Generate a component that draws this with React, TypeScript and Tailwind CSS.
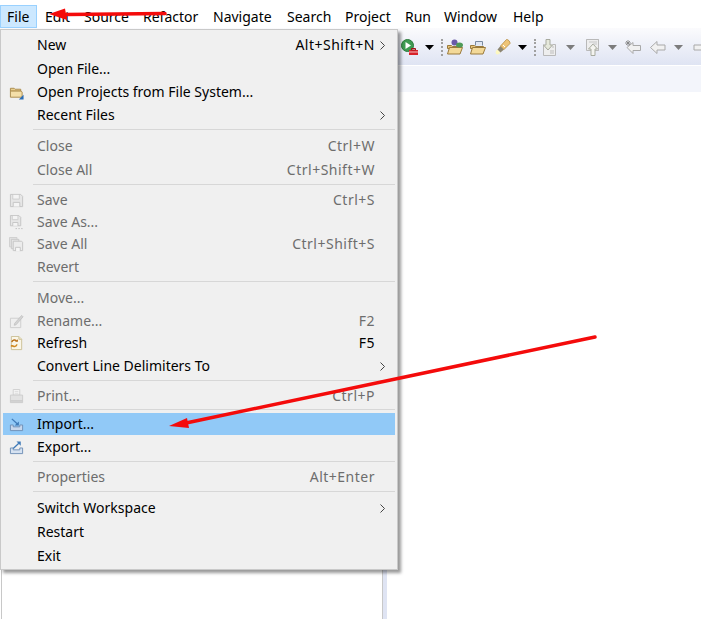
import React from 'react';

type Row = {
  label: string;
  h: number;
  keys?: string;
  off?: boolean;
  sub?: boolean;
  icon?: React.ReactNode;
  active?: boolean;
};

const FloppyIcon = () => (
  <svg width="15" height="15" viewBox="0 0 16 16" fill="none">
    <path d="M1.500 1.500h11l2 2v11h-13z" fill="#e6e6e6" stroke="#c4c4c4" />
    <path d="M4 2v4.500h7V2" fill="#f4f4f4" stroke="#cfcfcf" />
    <path d="M4.500 14.500V10h7v4.500" fill="#f4f4f4" stroke="#c4c4c4" />
  </svg>
);

const SaveAsIcon = () => (
  <svg width="15" height="15" viewBox="0 0 16 16" fill="none">
    <path d="M1.500 .5h9l2 2v9h-11z" fill="#e6e6e6" stroke="#c4c4c4" />
    <path d="M3.500 1v4h6V1" fill="#f4f4f4" stroke="#cfcfcf" />
    <path d="M4 11.500V8h5.500v3.500" fill="#f4f4f4" stroke="#c4c4c4" />
    <path d="M7 14.500h1.500M10 14.500h1.500M13 14.500h1.500" stroke="#bdbdbd" />
  </svg>
);

const SaveAllIcon = () => (
  <svg width="15" height="15" viewBox="0 0 16 16" fill="none">
    <path d="M.5.5h8v10h-8z" fill="#e2e2e2" stroke="#cfcfcf" />
    <path d="M2.500 2.500h8v10h-8z" fill="#e6e6e6" stroke="#c8c8c8" />
    <path d="M4.500 4.500h9l1 1v9h-10z" fill="#ececec" stroke="#c4c4c4" />
    <path d="M7 15v-4h5v4" fill="#f6f6f6" stroke="#c4c4c4" />
  </svg>
);

const RenameIcon = () => (
  <svg width="15" height="15" viewBox="0 0 16 16" fill="none">
    <path d="M1.500 4.500h11v10h-11z" fill="#efefef" stroke="#cdcdcd" />
    <path d="M6 10l7.500-8.500 1.500 1.500L7.500 11.500 5.500 12z" fill="#d4d4d4" stroke="#bdbdbd" strokeWidth=".8" />
  </svg>
);

const RefreshIcon = () => (
  <svg width="15" height="15" viewBox="0 0 16 16" fill="none">
    <path d="M2.500.5h8l3 3v11h-11z" fill="#faf6e8" stroke="#cbbf94" />
    <path d="M10.500.5v3h3" fill="#efe6c6" stroke="#cbbf94" />
    <path d="M3 6.500C3.500 3.800 7.200 3.400 8 5.500" stroke="#b9701a" strokeWidth="1.600" />
    <path d="M6.500 6h3V3.500z" fill="#b9701a" />
    <path d="M8.500 9C8 11.600 4.300 12 3.500 10" stroke="#d08a22" strokeWidth="1.600" />
    <path d="M5 9.500H2V12z" fill="#d08a22" />
  </svg>
);

const PrintIcon = () => (
  <svg width="15" height="15" viewBox="0 0 16 16" fill="none">
    <path d="M4.500.5h7v6h-7z" fill="#f7f7f7" stroke="#cfcfcf" />
    <path d="M6 2.500h4M6 4.500h4" stroke="#d9d9d9" />
    <path d="M1.500 6.500h13v6h-13z" fill="#e2e2e2" stroke="#cccccc" />
    <path d="M1.500 12.500h13v2h-13z" fill="#d4d4d4" stroke="#cccccc" />
  </svg>
);

const ImportIcon = () => (
  <svg width="15" height="15" viewBox="0 0 16 16" fill="none">
    <path d="M1.500 8.500v6h13v-6h-3v2h-7v-2z" fill="#c7d7ec" stroke="#6f8fb5" />
    <path d="M3 2l6 5.500" stroke="#3f7ab8" strokeWidth="1.400" />
    <path d="M10.500 9V4.800L6 9z" fill="#3f7ab8" />
  </svg>
);

const ExportIcon = () => (
  <svg width="15" height="15" viewBox="0 0 16 16" fill="none">
    <path d="M1.500 8.500v6h13v-6h-3v2h-7v-2z" fill="#d6e2f1" stroke="#6f8fb5" />
    <path d="M4.500 9l6-5.500" stroke="#3f7ab8" strokeWidth="1.400" />
    <path d="M12.500 1.500v4.600L8 1.500z" fill="#3f7ab8" />
  </svg>
);

const FolderIcon = () => (
  <svg width="15" height="15" viewBox="0 0 16 16" fill="none">
    <path d="M1.500 3.500h4l1 1h6v2h-11z" fill="#e9cf8f" stroke="#a98a4c" />
    <path d="M1.500 6.500h11.500l1 1v5.500H1.500z" fill="#f4dfa9" stroke="#a98a4c" />
    <path d="M15.500 10.500v5h-5z" fill="#2a6db5" />
  </svg>
);

const rows: (Row | { sep: string })[] = [
  { label: 'New', h: 24, keys: 'Alt+Shift+N', sub: true },
  { label: 'Open File...', h: 24 },
  { label: 'Open Projects from File System...', h: 22, icon: <FolderIcon /> },
  { label: 'Recent Files', h: 24, sub: true },
  { sep: 'h-[7px]' },
  { label: 'Close', h: 24, keys: 'Ctrl+W', off: true },
  { label: 'Close All', h: 24, keys: 'Ctrl+Shift+W', off: true },
  { sep: 'h-[7px]' },
  { label: 'Save', h: 22, keys: 'Ctrl+S', off: true, icon: <FloppyIcon /> },
  { label: 'Save As...', h: 22, off: true, icon: <SaveAsIcon /> },
  { label: 'Save All', h: 22, keys: 'Ctrl+Shift+S', off: true, icon: <SaveAllIcon /> },
  { label: 'Revert', h: 24, off: true },
  { sep: 'h-[7px]' },
  { label: 'Move...', h: 24, off: true },
  { label: 'Rename...', h: 22, keys: 'F2', off: true, icon: <RenameIcon /> },
  { label: 'Refresh', h: 22, keys: 'F5', icon: <RefreshIcon /> },
  { label: 'Convert Line Delimiters To', h: 24, sub: true },
  { sep: 'h-[7px]' },
  { label: 'Print...', h: 22, keys: 'Ctrl+P', off: true, icon: <PrintIcon /> },
  { sep: 'h-[6px]' },
  { label: 'Import...', h: 22, icon: <ImportIcon />, active: true },
  { label: 'Export...', h: 24, icon: <ExportIcon /> },
  { sep: 'h-[6px]' },
  { label: 'Properties', h: 24, keys: 'Alt+Enter', off: true },
  { sep: 'h-[7px]' },
  { label: 'Switch Workspace', h: 24, sub: true },
  { label: 'Restart', h: 24 },
  { label: 'Exit', h: 24 },
];

const menus = [
  { name: 'Edit', w: 'w-[39px]' },
  { name: 'Source', w: 'w-[59px]' },
  { name: 'Refactor', w: 'w-[70px]' },
  { name: 'Navigate', w: 'w-[74px]' },
  { name: 'Search', w: 'w-[58px]' },
  { name: 'Project', w: 'w-[60px]' },
  { name: 'Run', w: 'w-[39px]' },
  { name: 'Window', w: 'w-[69px]' },
  { name: 'Help', w: 'w-[50px]' },
];

const Caret = ({ off }: { off?: boolean }) => (
  <svg width="9" height="5" viewBox="0 0 9 5" className="block">
    <path d="M0 0h9L4.500 5z" fill={off ? '#7c7c7c' : '#000'} />
  </svg>
);

const Divider = () => (
  <div className="w-px h-[17px] border-l-2 border-dotted border-[#a0a0a0]" />
);

const Toolbar = () => (
  <div className="h-[37px] bg-gradient-to-b from-[#fbfbfd] to-[#dfe4f3] flex items-center pt-[1px] pl-[401px] overflow-hidden">
    <svg width="17" height="16" viewBox="0 0 17 16" className="shrink-0">
      <circle cx="6.500" cy="6.500" r="6" fill="#3f9b52" stroke="#2c7a3c" />
      <path d="M4.500 3l5.500 3.500L4.500 10z" fill="#fff" />
      <path d="M8 11h9v5H8z" fill="#d8222a" />
      <path d="M10.500 9.500h4V11h-4z" fill="none" stroke="#a31218" />
      <path d="M8 13h9" stroke="#fff" strokeWidth=".7" />
    </svg>
    <div className="ml-[7px]"><Caret /></div>
    <div className="ml-[7px]"><Divider /></div>
    <svg width="17" height="16" viewBox="0 0 17 16" className="ml-[4px] shrink-0">
      <path d="M.5 6.500h4l1 1h8v2H.5z" fill="#e5c27a" stroke="#9a7a3c" />
      <path d="M.5 15l2-6.500h13L13 15z" fill="#f3d998" stroke="#9a7a3c" />
      <circle cx="7.500" cy="3.500" r="3" fill="#6a5aa8" />
      <ellipse cx="12.500" cy="6" rx="3.500" ry="2.500" fill="#4f9a58" />
    </svg>
    <svg width="16" height="16" viewBox="0 0 16 16" className="ml-[6px] shrink-0">
      <path d="M5.500 6.500v-4h7v4" fill="#dfe6f2" stroke="#7a8aa0" />
      <path d="M.5 6.500h4l1 1h8v2H.5z" fill="#e5c27a" stroke="#9a7a3c" />
      <path d="M.5 15l2-6.500h13L13 15z" fill="#f3d998" stroke="#9a7a3c" />
    </svg>
    <svg width="17" height="17" viewBox="0 0 17 17" className="ml-[8px] shrink-0">
      <path d="M2 15C4 16 5.500 15 6.500 13.500L3.500 10.500C2 11.500 1 13 2 15z" fill="#fdf8c0" />
      <path d="M3.500 10.500L6.500 13.500L10 10.500L6.500 7z" fill="#8d8672" />
      <path d="M6.500 7L10 10.500L16 4.500C16.500 3 14 0 12.500.5z" fill="#eec477" stroke="#b58d43" strokeWidth=".8" />
      <path d="M9 6l2 2" stroke="#fff" strokeWidth="1" />
    </svg>
    <div className="ml-[7px]"><Caret /></div>
    <div className="ml-[7px]"><Divider /></div>
    <svg width="15" height="17" viewBox="0 0 15 17" className="ml-[6px] shrink-0">
      <path d="M1.500 5.500v11h12v-11h-3" fill="#eeeeee" stroke="#b9b9b9" />
      <path d="M4 .5h4v5.500h2.500L6 11 1.500 6H4z" fill="#e6e9dc" stroke="#a8ab9f" />
      <path d="M8 12h4M8 14h4M10 8h2" stroke="#bdbdbd" />
    </svg>
    <div className="ml-[9px]"><Caret off /></div>
    <svg width="15" height="17" viewBox="0 0 15 17" className="ml-[10px] shrink-0">
      <path d="M1.500.5h12v11h-3" fill="#eeeeee" stroke="#b9b9b9" />
      <path d="M1.500.5h12v11h-12z" fill="#eeeeee" stroke="#b9b9b9" />
      <path d="M6 16.500V10H3.500L8 5l4.500 5H10v6.500z" fill="#f4f4f0" stroke="#a8ab9f" />
      <path d="M4 3h8M8 5h4" stroke="#c6c6c6" />
    </svg>
    <div className="ml-[8px]"><Caret off /></div>
    <svg width="16" height="14" viewBox="0 0 16 14" className="ml-[8px] shrink-0">
      <path d="M2 7.500l6-5v3h7.500v5H8v3z" fill="#f1f1f1" stroke="#a9a9a9" />
      <path d="M3 0v6M0 3h6M1 1l4 4M5 1L1 5" stroke="#7c7c7c" strokeWidth=".8" />
    </svg>
    <svg width="16" height="13" viewBox="0 0 16 13" className="ml-[9px] shrink-0">
      <path d="M.5 6.500l6.500-6v3.500h8v5H7v3.500z" fill="#f1f1f1" stroke="#a9a9a9" />
    </svg>
    <div className="ml-[8px]"><Caret off /></div>
    <svg width="16" height="13" viewBox="0 0 16 13" className="ml-[10px] shrink-0">
      <path d="M15.500 6.500l-6.500-6v3.500h-8v5h8v3.500z" fill="#f1f1f1" stroke="#a9a9a9" />
    </svg>
  </div>
);

const FileMenu = () => (
  <div className="absolute left-0 top-[29px] w-[398px] h-[541px] bg-[#f0f0f0] border border-[#c9c9c9] px-[2px] pt-[3px] shadow-[3px_3px_3px_rgba(0,0,0,0.4)]">
    {rows.map((row, i) =>
      'sep' in row ? (
        <div key={i} className={`${row.sep} pl-[30px] pt-[2px]`}>
          <div className="h-px w-full bg-[#d7d7d7]" />
        </div>
      ) : (
        <div
          key={i}
          className={`flex items-center ${row.active ? 'bg-[#91c9f7]' : ''} ${row.off ? 'text-[#6d6d6d]' : 'text-[#000]'}`}
          style={{ height: row.h }}
        >
          <div className="w-[34px] pl-[6px] shrink-0">{row.icon}</div>
          <span className="flex-1 whitespace-nowrap">{row.label}</span>
          {row.keys && <span className="whitespace-nowrap tracking-[0.5px]">{row.keys}</span>}
          <div className="w-[20px] flex justify-end pr-[10px] shrink-0">
            {row.sub && (
              <svg width="5" height="9" viewBox="0 0 5 9" fill="none">
                <path d="M.5.500l4 4-4 4" stroke="#444" />
              </svg>
            )}
          </div>
        </div>
      ),
    )}
  </div>
);

const Arrows = () => (
  <svg width="701" height="619" viewBox="0 0 701 619" className="absolute left-0 top-0 pointer-events-none">
    <path d="M165 13.500L66 14.500" stroke="#f40b0b" strokeWidth="3.500" strokeLinecap="round" />
    <path d="M49 14L65 8.500l2 11.500z" fill="#f40b0b" />
    <path d="M595 337L186 423" stroke="#f40b0b" strokeWidth="3.500" strokeLinecap="round" />
    <path d="M169 426l18-8 2 10z" fill="#f40b0b" />
  </svg>
);

export default function App() {
  return (
    <div className="relative w-[701px] h-[619px] bg-white overflow-hidden text-[14px] leading-none font-['Noto_Sans',sans-serif]">
      <div className="h-[28px] flex items-end">
        <div className="w-[37px] h-[23px] bg-[#cce8ff] border border-[#99d1ff] pl-[6px] flex items-center text-[#000]">File</div>
        {menus.map((m) => (
          <div key={m.name} className={`${m.w} pl-[8px] h-[23px] flex items-center text-[#000]`}>{m.name}</div>
        ))}
      </div>
      <Toolbar />
      <div className="h-px bg-white" />
      <div className="h-[26px] bg-[#f3f5fb]" />
      <div className="flex h-[527px]">
        <div className="w-[387px] border-r-[4px] border-[#dfe4f3] pl-[1px] shrink-0">
          <div className="h-full border-x border-[#c8c8c8]" />
        </div>
      </div>
      <FileMenu />
      <Arrows />
    </div>
  );
}
